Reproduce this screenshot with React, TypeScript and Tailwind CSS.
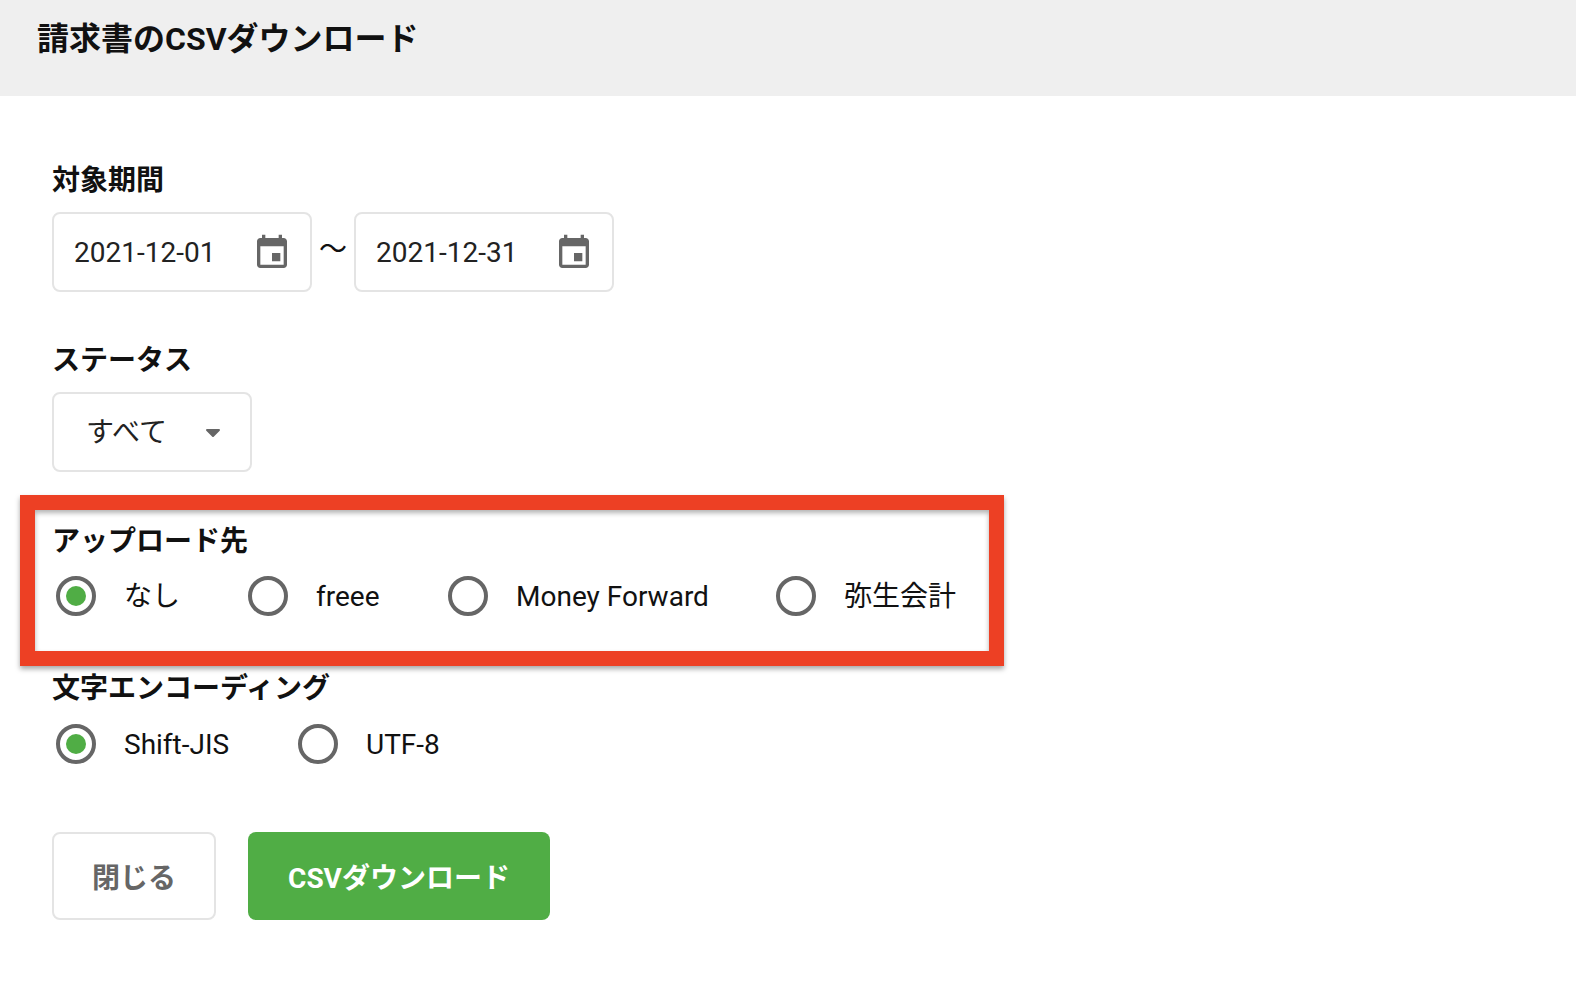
const fontStack = "font-['Roboto','Noto_Sans_CJK_JP',sans-serif]";

function CalendarIcon() {
  return (
    <svg viewBox="0 0 24 24" className="mt-[2px] h-10 w-10 fill-[#666666]">
      <path d="M17 12h-5v5h5v-5zM16 1v2H8V1H6v2H5c-1.11 0-1.99.9-1.99 2L3 19c0 1.1.89 2 2 2h14c1.1 0 2-.9 2-2V5c0-1.1-.9-2-2-2h-1V1h-2zm3 18H5V8h14v11z" />
    </svg>
  );
}

function DateField({ value }: { value: string }) {
  return (
    <div className="flex h-[80px] w-[260px] items-center justify-between rounded-lg border-2 border-[#e4e4e4] pl-[20px] pr-[18px]">
      <span className="pt-[2px] text-[28px] text-[#222222]">{value}</span>
      <CalendarIcon />
    </div>
  );
}

function Radio({ label, checked, labelWidth }: { label: string; checked?: boolean; labelWidth: string }) {
  return (
    <label className="flex items-center">
      <span className="flex h-10 w-10 items-center justify-center rounded-full border-4 border-[#666666]">
        {checked && <span className="h-5 w-5 rounded-full bg-[#50ad45]" />}
      </span>
      <span className={`ml-[28px] pt-[2px] text-[28px] leading-[40px] text-[#111111] ${labelWidth}`}>{label}</span>
    </label>
  );
}

function Label({ children }: { children: string }) {
  return <div className="text-[28px] font-bold leading-[40px] text-[#111111]">{children}</div>;
}

export default function App() {
  return (
    <div className={`relative min-h-[984px] bg-white ${fontStack}`}>
      <header className="h-[96px] bg-[#efefef] pl-[37px] pt-[17px]">
        <h1 className="text-[32px] font-bold leading-[44px] text-[#111111]">請求書のCSVダウンロード</h1>
      </header>

      <main className="pl-[52px] pt-[65px]">
        <section>
          <Label>対象期間</Label>
          <div className="mt-[11px] flex items-center gap-[8px]">
            <DateField value="2021-12-01" />
            <span className="-ml-[1px] mr-[1px] w-[26px] pb-[4px] text-center text-[28px] text-[#111111]">〜</span>
            <DateField value="2021-12-31" />
          </div>
        </section>

        <section className="mt-[49px]">
          <Label>ステータス</Label>
          <div className="mt-[11px] flex h-[80px] w-[200px] items-center rounded-lg border-2 border-[#e4e4e4] pl-[32px]">
            <span className="w-[120px] pt-[2px] text-[28px] text-[#222222]">すべて</span>
            <svg viewBox="0 0 14 8" className="mt-[2px] h-[8px] w-[14px] fill-[#666666]">
              <path d="M1 0h12a1 1 0 0 1 .7 1.7L7.7 7.7a1 1 0 0 1-1.4 0L.3 1.7A1 1 0 0 1 1 0z" />
            </svg>
          </div>
        </section>

        <section className="mt-[50px]">
          <Label>アップロード先</Label>
          <div className="mt-[13px] flex items-center pl-[4px]">
            <Radio label="なし" checked labelWidth="w-[124px]" />
            <Radio label="freee" labelWidth="w-[132px]" />
            <Radio label="Money Forward" labelWidth="w-[260px]" />
            <Radio label="弥生会計" labelWidth="w-[112px]" />
          </div>
        </section>

        <section className="mt-[52px]">
          <Label>文字エンコーディング</Label>
          <div className="mt-[14px] flex items-center pl-[4px]">
            <Radio label="Shift-JIS" checked labelWidth="w-[174px]" />
            <Radio label="UTF-8" labelWidth="w-[80px]" />
          </div>
        </section>

        <div className="mt-[67px] flex gap-[32px]">
          <button className="h-[88px] w-[164px] rounded-lg border-2 border-[#e4e4e4] pt-[6px] text-[28px] font-bold text-[#666666]">
            閉じる
          </button>
          <button className="h-[88px] w-[302px] rounded-lg bg-[#50ad45] pt-[6px] text-[28px] font-bold text-white">
            CSVダウンロード
          </button>
        </div>
      </main>

      {/* Annotation frame drawn over the screenshot */}
      <div className="pointer-events-none absolute left-[20px] top-[495px] h-[171px] w-[984px] border-[15px] border-[#ed4024] shadow-[0_3px_5px_rgba(0,0,0,0.35),inset_0_3px_5px_rgba(0,0,0,0.3)]" />
    </div>
  );
}
